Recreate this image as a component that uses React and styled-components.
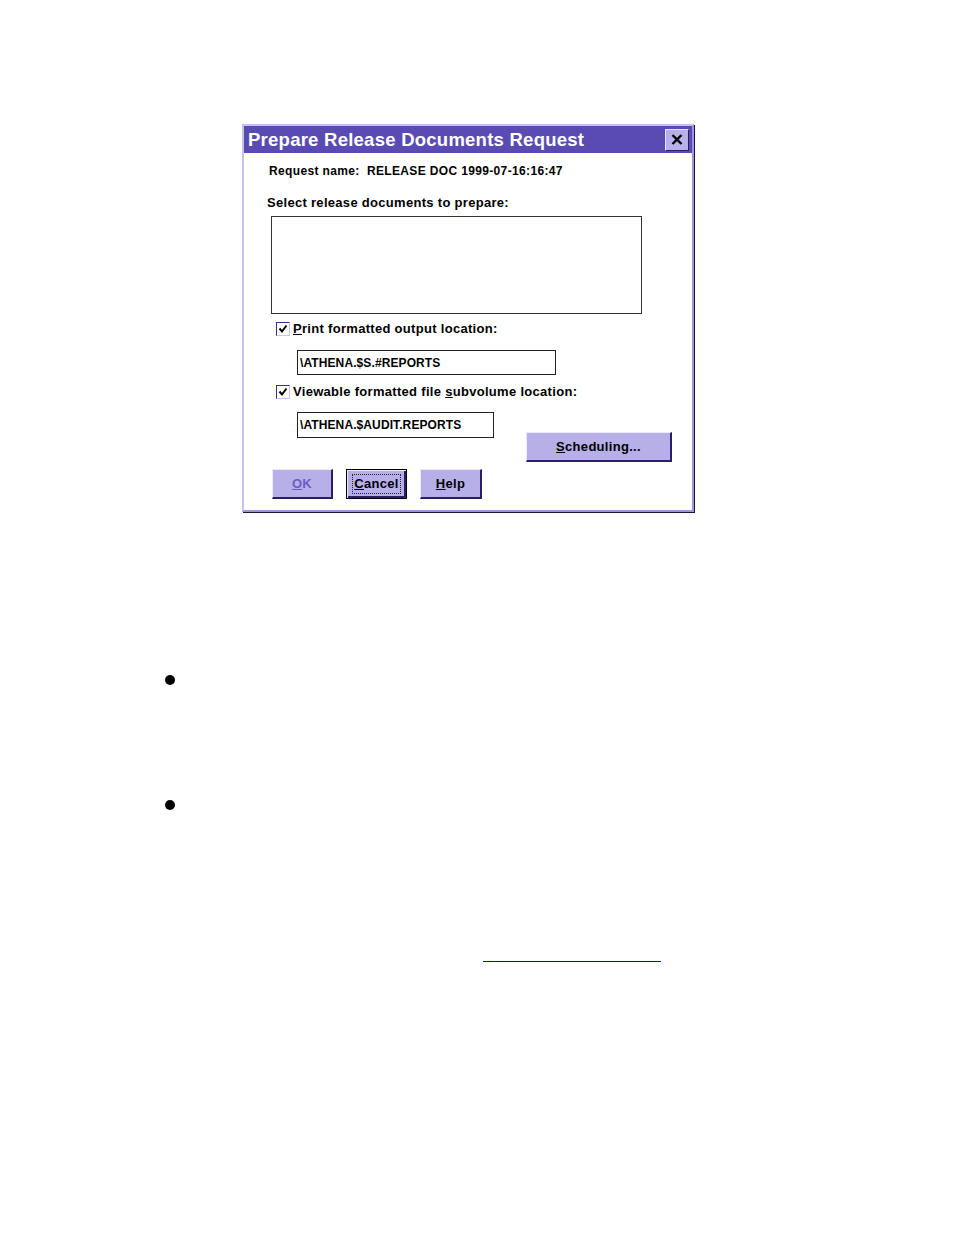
import React from "react";
import styled, { createGlobalStyle } from "styled-components";

const Global = createGlobalStyle`
  html, body { margin: 0; padding: 0; background: #ffffff; }
  body { font-family: "Liberation Sans", Arial, sans-serif; }
  * { box-sizing: border-box; }
`;

const Page = styled.div`
  width: 954px;
  height: 1235px;
  padding-top: 124px;
  position: relative;
  background: #fff;
`;

const Window = styled.div`
  margin-left: 242px;
  width: 452px;
  height: 388px;
  border: 2px solid #c7c1f0;
  border-right-color: #9e95dc;
  border-bottom-color: #9e95dc;
  box-shadow: 1px 1px 0 #1c1440;
  background: #fff;
  display: flex;
  flex-direction: column;
`;

const TitleBar = styled.div`
  height: 27px;
  background: #5a4ab4;
  display: flex;
  align-items: center;
  justify-content: space-between;
  padding: 0 3px 0 4px;
`;

const Title = styled.div`
  color: #fff;
  font-weight: bold;
  font-size: 18.5px;
  letter-spacing: 0.25px;
`;

const CloseBtn = styled.div`
  width: 24px;
  height: 22px;
  background: #b7b0ea;
  border: 1px solid #e4e0fb;
  border-right-color: #2a1f66;
  border-bottom-color: #2a1f66;
  display: flex;
  align-items: center;
  justify-content: center;
`;

const Body = styled.div`
  flex: 1;
  display: flex;
  flex-direction: column;
`;

const Label = styled.div`
  font-size: ${(p) => p.$size ?? 13}px;
  letter-spacing: ${(p) => p.$ls ?? 0.3}px;
  font-weight: bold;
  color: #000;
  line-height: 16px;
  margin-left: ${(p) => p.$left}px;
  margin-top: ${(p) => p.$top}px;
  white-space: pre;
`;

const ListBox = styled.div`
  margin-left: 27px;
  margin-top: 5px;
  width: 371px;
  height: 98px;
  border: 1px solid #333;
  background: #fff;
`;

const CheckRow = styled.div`
  display: flex;
  align-items: center;
  margin-left: 32px;
  margin-top: ${(p) => p.$top}px;
  gap: 3px;
  height: 15px;
`;

const Box = styled.div`
  width: 14px;
  height: 14px;
  border: 1px solid #3a2e8a;
  border-right-color: #c9c3f0;
  border-bottom-color: #c9c3f0;
  background: #fff;
  display: flex;
  align-items: center;
  justify-content: center;
`;

const CheckText = styled.span`
  font-size: 13px;
  letter-spacing: 0.3px;
  font-weight: bold;
  color: #000;
  line-height: 15px;
`;

const U = styled.span`
  text-decoration: underline;
`;

const Field = styled.div`
  margin-left: ${(p) => p.$left ?? 53}px;
  margin-top: ${(p) => p.$top ?? 0}px;
  width: ${(p) => p.$w}px;
  height: ${(p) => p.$h}px;
  border: 1px solid #222;
  background: #fff;
  font-size: 12px;
  letter-spacing: 0.1px;
  font-weight: bold;
  display: flex;
  align-items: center;
  padding-left: 2px;
`;

const FieldRow = styled.div`
  display: flex;
  align-items: flex-start;
  margin-top: ${(p) => p.$top}px;
`;

const Button = styled.div`
  width: ${(p) => p.$w}px;
  height: ${(p) => p.$h}px;
  margin-left: ${(p) => p.$left}px;
  margin-top: ${(p) => p.$top ?? 0}px;
  background: #b6afe8;
  border: 1px solid #ece9ff;
  border-right: 2px solid #2a1f66;
  border-bottom: 2px solid #2a1f66;
  display: flex;
  align-items: center;
  justify-content: center;
  font-size: 13px;
  letter-spacing: 0.3px;
  font-weight: bold;
  color: ${(p) => (p.$disabled ? "#6a5fc4" : "#000")};
  position: relative;
`;

const FocusButton = styled(Button)`
  border: 1px solid #000;
  box-shadow: inset 1px 1px 0 #ece9ff, inset -2px -2px 0 #2a1f66;
`;

const FocusRing = styled.div`
  border: 1px dotted #222;
  padding: 2px 1px;
  line-height: 14px;
`;

const ButtonRow = styled.div`
  display: flex;
  margin-top: 7px;
`;

const Bullets = styled.div`
  margin-left: 165px;
  margin-top: 163px;
  display: flex;
  flex-direction: column;
  gap: 115px;
`;

const Bullet = styled.div`
  width: 10px;
  height: 10px;
  border-radius: 50%;
  background: #000;
`;

const Rule = styled.div`
  margin-left: 483px;
  margin-top: 151px;
  width: 178px;
  height: 1px;
  background: #0000c8;
`;

const Check = () => (
  <svg width="10" height="10" viewBox="0 0 10 10">
    <path d="M1.5 4.5 L4 7.5 L8.5 1.5" stroke="#000" strokeWidth="2" fill="none" />
  </svg>
);

const XIcon = () => (
  <svg width="12" height="11" viewBox="0 0 12 11">
    <path d="M1.5 1 L10.5 10 M10.5 1 L1.5 10" stroke="#000" strokeWidth="2.4" />
  </svg>
);

export default function App() {
  return (
    <Page>
      <Global />
      <Window>
        <TitleBar>
          <Title>Prepare Release Documents Request</Title>
          <CloseBtn>
            <XIcon />
          </CloseBtn>
        </TitleBar>
        <Body>
          <Label $left={25} $top={10} $size={12} $ls={0.35}>Request name:  RELEASE DOC 1999-07-16:16:47</Label>
          <Label $left={23} $top={16}>Select release documents to prepare:</Label>
          <ListBox />
          <CheckRow $top={7}>
            <Box>
              <Check />
            </Box>
            <CheckText>
              <U>P</U>rint formatted output location:
            </CheckText>
          </CheckRow>
          <Field $top={14} $w={259} $h={25}>\ATHENA.$S.#REPORTS</Field>
          <CheckRow $top={9}>
            <Box>
              <Check />
            </Box>
            <CheckText>
              Viewable formatted file <U>s</U>ubvolume location:
            </CheckText>
          </CheckRow>
          <FieldRow $top={13}>
            <Field $w={197} $h={26}>\ATHENA.$AUDIT.REPORTS</Field>
            <Button $w={146} $h={30} $left={32} $top={20}>
              <span>
                <U>S</U>cheduling...
              </span>
            </Button>
          </FieldRow>
          <ButtonRow>
            <Button $w={61} $h={30} $left={28} $disabled>
              <U>O</U>K
            </Button>
            <FocusButton $w={61} $h={30} $left={13}>
              <FocusRing>
                <U>C</U>ancel
              </FocusRing>
            </FocusButton>
            <Button $w={62} $h={30} $left={13}>
              <span>
                <U>H</U>elp
              </span>
            </Button>
          </ButtonRow>
        </Body>
      </Window>
      <Bullets>
        <Bullet />
        <Bullet />
      </Bullets>
      <Rule />
    </Page>
  );
}
